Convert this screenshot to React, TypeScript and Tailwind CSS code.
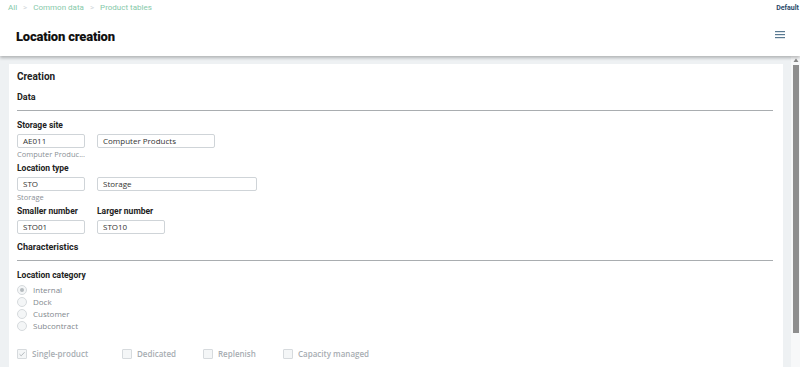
import React from 'react';

const labelFont = { fontFamily: 'Roboto, "Liberation Sans", sans-serif' };

const Field: React.FC<{ value: string; w: string }> = ({ value, w }) => (
  <div
    className={`${w} h-[14px] border border-[#cfd4d8] rounded-[2px] bg-white flex items-center px-[5px] text-[8px] leading-none text-[#333] font-['Open_Sans',sans-serif]`}
  >
    {value}
  </div>
);

const Label: React.FC<{ children: React.ReactNode }> = ({ children }) => (
  <div className="text-[8.5px] font-bold text-[#222] h-[10px] leading-[10px]" style={labelFont}>
    {children}
  </div>
);

const Helper: React.FC<{ children: React.ReactNode }> = ({ children }) => (
  <div className="text-[7.5px] text-[#8a9096] mt-[1px] h-[10px] leading-[10px]">{children}</div>
);

const Radio: React.FC<{ label: string; checked?: boolean }> = ({ label, checked }) => (
  <div className="flex items-center gap-[6px] h-[12px]">
    <span className="w-[10px] h-[10px] rounded-full border border-[#d6dadd] bg-[#f4f6f7] flex items-center justify-center">
      {checked && <span className="w-[4px] h-[4px] rounded-full bg-[#b5bbbf]" />}
    </span>
    <span className="text-[8px] leading-none text-[#82888e]">{label}</span>
  </div>
);

const Check: React.FC<{ label: string; checked?: boolean; w: string }> = ({ label, checked, w }) => (
  <div className={`${w} flex items-center gap-[5px] h-[12px]`}>
    <span className="w-[10px] h-[10px] border border-[#d6dadd] bg-[#f4f6f7] rounded-[1px] flex items-center justify-center">
      {checked && (
        <svg width="8" height="8" viewBox="0 0 8 8">
          <path d="M1.5 4.2 L3.2 5.8 L6.6 2.2" stroke="#b5bbbf" strokeWidth="1" fill="none" />
        </svg>
      )}
    </span>
    <span className="text-[8px] leading-none font-semibold text-[#a7adb2]">{label}</span>
  </div>
);

const App: React.FC = () => {
  return (
    <div className="w-[800px] h-[367px] overflow-hidden bg-[#eef1f3] flex flex-col font-['Open_Sans',sans-serif]">
      {/* header */}
      <div className="bg-white h-[56px] shrink-0 shadow-[0_2px_3px_rgba(0,0,0,0.25)] relative z-10 flex flex-col">
        <div className="flex items-center justify-between h-[16px] pl-[8px] pr-[1px]">
          <div className="flex items-center gap-[6px] text-[8px] text-[#86c9a9]" style={labelFont}>
            <span>All</span>
            <span className="text-[#d2d7da]">&gt;</span>
            <span>Common data</span>
            <span className="text-[#d2d7da]">&gt;</span>
            <span>Product tables</span>
          </div>
          <span className="text-[7px] font-bold text-[#2a4a6a]" style={labelFont}>Default</span>
        </div>
        <div className="flex items-center justify-between pl-[16px] pr-[15px] h-[40px] pt-[1px]">
          <h1 className="text-[13px] font-black text-[#111] tracking-[-0.2px]" style={labelFont}>Location creation</h1>
          <svg width="10" height="9" viewBox="0 0 10 9" className="-mt-[4px]">
            <rect x="0" y="1" width="10" height="1.2" fill="#5a7a92" />
            <rect x="0" y="4" width="10" height="1.2" fill="#5a7a92" />
            <rect x="0" y="7" width="10" height="1.2" fill="#5a7a92" />
          </svg>
        </div>
      </div>

      {/* body */}
      <div className="flex-1 flex min-h-0">
        <div className="flex-1 pl-[9px] pr-[8px] pt-[8px]">
          <div className="bg-white h-full pl-[8px] pr-[10px] pt-[5px]">
            <div className="text-[10px] font-bold text-[#222] h-[16px] leading-[16px]" style={labelFont}>Creation</div>
            <div className="text-[9px] font-bold text-[#222] mt-[6px] leading-[12px]" style={labelFont}>Data</div>
            <div className="h-[1px] bg-[#a9adb0] mt-[7px]" />

            <div className="mt-[9px]">
              <Label>Storage site</Label>
              <div className="flex gap-[12px] mt-[4px]">
                <Field value="AE011" w="w-[68px]" />
                <Field value="Computer Products" w="w-[118px]" />
              </div>
              <Helper>Computer Produc...</Helper>
            </div>

            <div className="mt-[4px]">
              <Label>Location type</Label>
              <div className="flex gap-[12px] mt-[4px]">
                <Field value="STO" w="w-[68px]" />
                <Field value="Storage" w="w-[160px]" />
              </div>
              <Helper>Storage</Helper>
            </div>

            <div className="mt-[4px] flex gap-[12px]">
              <div>
                <Label>Smaller number</Label>
                <div className="mt-[4px]"><Field value="STO01" w="w-[68px]" /></div>
              </div>
              <div>
                <Label>Larger number</Label>
                <div className="mt-[4px]"><Field value="STO10" w="w-[68px]" /></div>
              </div>
            </div>

            <div className="text-[9px] font-bold text-[#222] mt-[7px] h-[12px] leading-[12px]" style={labelFont}>Characteristics</div>
            <div className="h-[1px] bg-[#a9adb0] mt-[7px]" />

            <div className="mt-[9px]">
              <Label>Location category</Label>
              <div className="mt-[4px] flex flex-col">
                <Radio label="Internal" checked />
                <Radio label="Dock" />
                <Radio label="Customer" />
                <Radio label="Subcontract" />
              </div>
            </div>

            <div className="flex mt-[16px]">
              <Check label="Single-product" checked w="w-[105px]" />
              <Check label="Dedicated" w="w-[81px]" />
              <Check label="Replenish" w="w-[80px]" />
              <Check label="Capacity managed" w="w-[110px]" />
            </div>
          </div>
        </div>

        {/* scrollbar */}
        <div className="w-[9px] shrink-0 bg-[#f7f8f9] flex flex-col items-center pt-[2px]">
          <svg width="6" height="5" viewBox="0 0 6 5">
            <path d="M3 0.5 L5.5 4 L0.5 4 Z" fill="#888" />
          </svg>
          <div className="w-[6px] h-[268px] bg-[#8e8e8e] mt-[2px]" />
        </div>
      </div>
    </div>
  );
};

export default App;
